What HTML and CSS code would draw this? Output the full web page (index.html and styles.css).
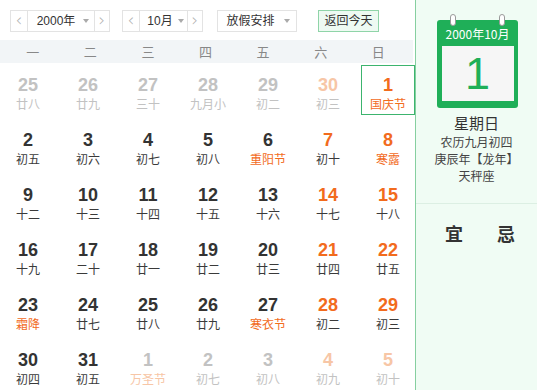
FILE: index.html
```html
<!DOCTYPE html>
<html lang="zh-CN">
<head>
<meta charset="utf-8">
<title>万年历</title>
<link rel="stylesheet" href="styles.css">
</head>
<body>
<div class="app">
  <div class="main">
    <div class="toolbar">
      <div class="sel sel-year">
        <span class="arr">&lsaquo;</span>
        <span class="val">2000年<i class="caret"></i></span>
        <span class="arr">&rsaquo;</span>
      </div>
      <div class="sel sel-month">
        <span class="arr">&lsaquo;</span>
        <span class="val">10月<i class="caret"></i></span>
        <span class="arr">&rsaquo;</span>
      </div>
      <div class="sel sel-holiday">
        <span class="val">放假安排<i class="caret"></i></span>
      </div>
      <div class="today-btn">返回今天</div>
    </div>
    <div class="week">
      <span>一</span><span>二</span><span>三</span><span>四</span><span>五</span><span>六</span><span>日</span>
    </div>
    <div class="days">
      <div class="day other"><b>25</b><span>廿八</span></div>
      <div class="day other"><b>26</b><span>廿九</span></div>
      <div class="day other"><b>27</b><span>三十</span></div>
      <div class="day other"><b>28</b><span>九月小</span></div>
      <div class="day other"><b>29</b><span>初二</span></div>
      <div class="day other wkend"><b>30</b><span>初三</span></div>
      <div class="day wkend fest selected"><b>1</b><span>国庆节</span></div>

      <div class="day"><b>2</b><span>初五</span></div>
      <div class="day"><b>3</b><span>初六</span></div>
      <div class="day"><b>4</b><span>初七</span></div>
      <div class="day"><b>5</b><span>初八</span></div>
      <div class="day fest"><b>6</b><span>重阳节</span></div>
      <div class="day wkend"><b>7</b><span>初十</span></div>
      <div class="day wkend fest"><b>8</b><span>寒露</span></div>

      <div class="day"><b>9</b><span>十二</span></div>
      <div class="day"><b>10</b><span>十三</span></div>
      <div class="day"><b>11</b><span>十四</span></div>
      <div class="day"><b>12</b><span>十五</span></div>
      <div class="day"><b>13</b><span>十六</span></div>
      <div class="day wkend"><b>14</b><span>十七</span></div>
      <div class="day wkend"><b>15</b><span>十八</span></div>

      <div class="day"><b>16</b><span>十九</span></div>
      <div class="day"><b>17</b><span>二十</span></div>
      <div class="day"><b>18</b><span>廿一</span></div>
      <div class="day"><b>19</b><span>廿二</span></div>
      <div class="day"><b>20</b><span>廿三</span></div>
      <div class="day wkend"><b>21</b><span>廿四</span></div>
      <div class="day wkend"><b>22</b><span>廿五</span></div>

      <div class="day fest"><b>23</b><span>霜降</span></div>
      <div class="day"><b>24</b><span>廿七</span></div>
      <div class="day"><b>25</b><span>廿八</span></div>
      <div class="day"><b>26</b><span>廿九</span></div>
      <div class="day fest"><b>27</b><span>寒衣节</span></div>
      <div class="day wkend"><b>28</b><span>初二</span></div>
      <div class="day wkend"><b>29</b><span>初三</span></div>

      <div class="day"><b>30</b><span>初四</span></div>
      <div class="day"><b>31</b><span>初五</span></div>
      <div class="day other fest"><b>1</b><span>万圣节</span></div>
      <div class="day other"><b>2</b><span>初七</span></div>
      <div class="day other"><b>3</b><span>初八</span></div>
      <div class="day other wkend"><b>4</b><span>初九</span></div>
      <div class="day other wkend"><b>5</b><span>初十</span></div>
    </div>
  </div>
  <aside class="side">
    <div class="cal-icon">
      <i class="ring ring-l"></i><i class="ring ring-r"></i>
      <div class="cal-head">2000年10月</div>
      <div class="cal-body">1</div>
    </div>
    <div class="info">
      <div class="weekday">星期日</div>
      <div>农历九月初四</div>
      <div>庚辰年【龙年】</div>
      <div>天秤座</div>
    </div>
    <div class="yiji"><span>宜</span><span>忌</span></div>
  </aside>
</div>
</body>
</html>
```
FILE: styles.css
```css
* { box-sizing: border-box; }
html, body { margin: 0; padding: 0; background: #fff; }
body {
  font-family: "Liberation Sans", "Noto Sans CJK SC", sans-serif;
  font-size: 12px;
  color: #333;
}
.app {
  display: flex;
  width: 537px;
  height: 390px;
  overflow: hidden;
}
.main {
  width: 415px;
  flex: none;
}
.toolbar {
  display: flex;
  align-items: flex-start;
  height: 40px;
  padding: 10px 0 0 10px;
}
.sel {
  display: flex;
  height: 22px;
  border: 1px solid #e3e3e3;
  background: #fff;
  line-height: 20px;
}
.sel .arr {
  width: 17px;
  text-align: center;
  color: #b0b0b0;
  font-size: 17px;
  line-height: 18px;
  font-family: "DejaVu Sans", sans-serif;
  font-weight: 300;
}
.sel .arr:last-child { width: 15px; border-left: 1px solid #e3e3e3; }
.sel .arr:first-child { border-right: 1px solid #e3e3e3; }
.sel .val {
  display: flex;
  align-items: center;
  justify-content: center;
  gap: 8px;
  color: #333;
}
.sel-year { width: 100px; }
.sel-year .val { width: 66px; padding-left: 4px; }
.sel-month { width: 81px; margin-left: 12px; }
.sel-month .val { width: 47px; padding-left: 4px; gap: 5px; }
.sel-holiday { width: 80px; margin-left: 14px; }
.sel-holiday .val { width: 100%; padding-left: 2px; gap: 9px; }
.caret {
  width: 0;
  height: 0;
  border-left: 3.5px solid transparent;
  border-right: 3.5px solid transparent;
  border-top: 4px solid #aaa;
}
.today-btn {
  margin-left: 21px;
  width: 61px;
  height: 22px;
  border: 1px solid #8fd4a8;
  background: #eefaf2;
  text-align: center;
  line-height: 20px;
  color: #333;
}
.week {
  display: grid;
  grid-template-columns: repeat(7, 1fr);
  height: 23px;
  margin-right: 2px;
  padding: 0 6px 0 4px;
  background: #f2f5f7;
  color: #888;
  font-size: 13px;
  line-height: 23px;
  text-align: center;
  font-family: "Noto Sans CJK SC", sans-serif;
}
.days {
  display: grid;
  grid-template-columns: repeat(7, 54px);
  grid-auto-rows: 50px;
  column-gap: 6px;
  row-gap: 5px;
  padding: 2px 0 0 1px;
}
.day {
  display: flex;
  flex-direction: column;
  align-items: center;
  border: 1px solid transparent;
}
.day b {
  padding-top: 8px;
  font-size: 18px;
  line-height: 22px;
  font-weight: bold;
  color: #333;
}
.day span {
  font-size: 12px;
  line-height: 16px;
  color: #3a3a3a;
  font-family: "Noto Sans CJK SC", sans-serif;
}
.day.wkend b { color: #f26b1d; }
.day.fest span { color: #f26b1d; }
.day.other b, .day.other span { color: #c2c2c2; }
.day.other.wkend b { color: #f7c6a6; }
.day.other.fest span { color: #f7c6a6; }
.day.selected { border-color: #3cb46e; }

.side {
  width: 122px;
  flex: none;
  background: #f0fcf4;
  border-left: 1px solid #86cfa0;
  display: flex;
  flex-direction: column;
  align-items: center;
  padding-top: 20px;
}
.cal-icon {
  position: relative;
  width: 81px;
  height: 88px;
  background: #1faf58;
  border-radius: 3px;
  padding: 0 4px 7px 5px;
  margin-left: 1px;
}
.ring {
  position: absolute;
  top: -6px;
  width: 6px;
  height: 12px;
  background: #fff;
  border: 1px solid #9a9a9a;
  border-radius: 3px;
}
.ring-l { left: 13px; }
.ring-r { left: 62px; }
.cal-head {
  height: 26px;
  line-height: 26px;
  padding-top: 1px;
  color: #fff;
  text-align: center;
  font-size: 12px;
  font-family: "Noto Sans CJK SC", sans-serif;
}
.cal-body {
  height: 55px;
  background: #f6f6f6;
  color: #1faf58;
  text-align: center;
  font-size: 45px;
  line-height: 55px;
  font-family: "Liberation Sans", sans-serif;
}
.info {
  margin-top: 5px;
  text-align: center;
  font-family: "Noto Sans CJK SC", sans-serif;
  font-size: 12px;
  line-height: 17px;
  color: #444;
}
.info .weekday {
  font-size: 15px;
  line-height: 20px;
  color: #333;
}
.yiji {
  align-self: stretch;
  margin-top: 19px;
  border-top: 1px solid #dcefe3;
  display: flex;
  justify-content: space-between;
  padding: 18px 22px 0 29px;
  font-family: "Noto Sans CJK SC", sans-serif;
  font-weight: bold;
  font-size: 18px;
  line-height: 22px;
  color: #333;
}
```
